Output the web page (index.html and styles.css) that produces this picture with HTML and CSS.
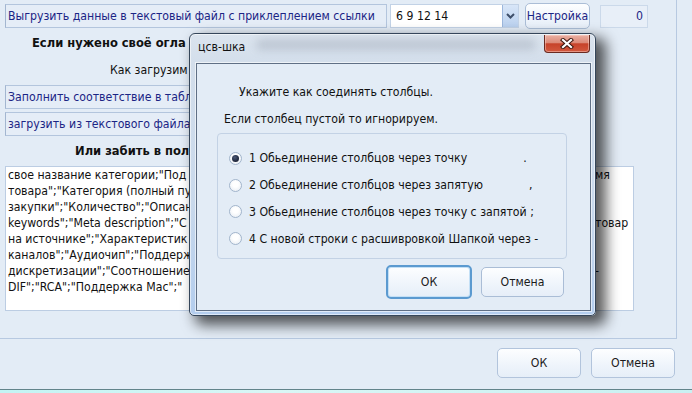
FILE: index.html
```html
<!DOCTYPE html>
<html lang="ru">
<head>
<meta charset="utf-8">
<title>цсв-шка</title>
<link rel="stylesheet" href="styles.css">
</head>
<body>
<div class="screen">
  <div class="panel">
    <div class="row1">
      <div class="box box-export">Выгрузить данные в текстовый файл с приклеплением ссылки</div>
      <div class="combo">
        <div class="combo-input">6 9 12 14</div>
        <div class="combo-btn"><svg width="9" height="6" viewBox="0 0 9 6"><path d="M1 1 L4.5 4.5 L8 1" fill="none" stroke="#3e4f6a" stroke-width="2"/></svg></div>
      </div>
      <div class="btn btn-set">Настройка</div>
      <div class="count">0</div>
    </div>
    <div class="label bold label-own">Если нужено своё огла</div>
    <div class="label label-how">Как загрузим</div>
    <div class="box box-fill">Заполнить соответствие в таблице</div>
    <div class="box box-load">загрузить из текстового файла</div>
    <div class="label bold label-or">Или забить в пол</div>
    <div class="textarea">
      <div class="tline"><span class="tl">свое название категории;"Под</span><span class="tr">мя</span></div>
      <div class="tline"><span class="tl">товара";"Категория (полный пу</span><span class="tr"></span></div>
      <div class="tline"><span class="tl">закупки";"Количество";"Описан</span><span class="tr"></span></div>
      <div class="tline"><span class="tl">keywords";"Meta description";"С</span><span class="tr">товар</span></div>
      <div class="tline"><span class="tl">на источнике";"Характеристик</span><span class="tr"></span></div>
      <div class="tline"><span class="tl">каналов";"Аудиочип";"Поддерж</span><span class="tr"></span></div>
      <div class="tline"><span class="tl">дискретизации";"Соотношение</span><span class="tr">-</span></div>
      <div class="tline"><span class="tl">DIF";"RCA";"Поддержка Mac";"</span><span class="tr"></span></div>
    </div>
  </div>
  <div class="footer">
    <div class="btn btn-main">ОК</div>
    <div class="btn btn-main">Отмена</div>
  </div>
  <div class="taskbar"></div>

  <div class="dialog">
    <div class="titlebar">
      <span class="title">цсв-шка</span>
      <div class="close"><svg width="14" height="11" viewBox="0 0 14 11"><path d="M3 2 L11 9 M11 2 L3 9" stroke="#3d1810" stroke-width="4.2" stroke-linecap="square"/><path d="M3 2 L11 9 M11 2 L3 9" stroke="#ffffff" stroke-width="2.2" stroke-linecap="square"/></svg></div>
    </div>
    <div class="client">
      <div class="dlg-line1">Укажите как соединять столбцы.</div>
      <div class="dlg-line2">Если столбец пустой то игнорируем.</div>
      <div class="group">
        <div class="opt"><span class="radio checked"></span><span>1 Обьединение столбцов через точку</span><span class="sep sep1">.</span></div>
        <div class="opt"><span class="radio"></span><span>2 Обьединение столбцов через запятую</span><span class="sep sep2">,</span></div>
        <div class="opt"><span class="radio"></span><span>3 Обьединение столбцов через точку с запятой ;</span></div>
        <div class="opt"><span class="radio"></span><span>4 С новой строки с расшивровкой Шапкой через -</span></div>
      </div>
      <div class="dlg-buttons">
        <div class="btn btn-ok">ОК</div>
        <div class="btn btn-cancel">Отмена</div>
      </div>
    </div>
  </div>
</div>
</body>
</html>
```

FILE: styles.css
```css
* { box-sizing: border-box; }
html, body {
  margin: 0;
  padding: 0;
  width: 692px;
  height: 393px;
  overflow: hidden;
}
body {
  background: #e3ecf6;
  font-family: "DejaVu Sans Condensed", "DejaVu Sans", sans-serif;
  font-size: 12.2px;
  color: #111;
}
.screen {
  position: relative;
  width: 692px;
  height: 393px;
}
.panel {
  width: 677px;
  height: 339px;
  border-right: 1px solid #b7c9e1;
  border-bottom: 1px solid #b7c9e1;
  padding-left: 5px;
  display: flex;
  flex-direction: column;
}
.row1 {
  display: flex;
  align-items: center;
  margin-top: 4px;
  height: 24px;
}
.box {
  height: 24px;
  border: 1px solid #b3c5dd;
  border-left-color: #a3b6d0;
  background: #e5edf7;
  color: #1b2585;
  padding-left: 2px;
  display: flex;
  align-items: center;
  white-space: nowrap;
  overflow: hidden;
}
.box-export { width: 382px; }
.box-fill { width: 385px; margin-top: 7px; }
.box-load { width: 385px; margin-top: 3px; }
.combo {
  display: flex;
  margin-left: 3px;
  width: 129px;
  height: 24px;
  border: 1px solid #c2d2e6;
}
.combo-input {
  flex: 1;
  background: #fff;
  padding-left: 5px;
  display: flex;
  align-items: center;
  color: #111;
}
.combo-btn {
  width: 16px;
  background: linear-gradient(#d8e6f8, #b9d0ee);
  border-left: 1px solid #9cb7dc;
  display: flex;
  align-items: center;
  justify-content: center;
}
.btn {
  display: flex;
  align-items: center;
  justify-content: center;
  border: 1px solid #aabdd6;
  border-radius: 4px;
  background: linear-gradient(#fdfeff, #eef4fb 60%, #e6eef8);
  color: #1a1a1a;
}
.btn-set {
  margin-left: 6px;
  width: 65px;
  height: 26px;
  color: #1b2585;
  border-radius: 5px;
}
.count {
  margin-left: 10px;
  width: 48px;
  height: 23px;
  border: 1px solid #cbd9ea;
  background: #e8eff8;
  color: #1b2585;
  display: flex;
  align-items: center;
  justify-content: flex-end;
  padding-right: 4px;
}
.label {
  line-height: 16px;
  height: 16px;
  white-space: nowrap;
}
.bold { font-weight: bold; font-size: 12.8px; }
.label-own { margin-top: 7px; padding-left: 27px; }
.label-how { margin-top: 11px; padding-left: 105px; }
.label-or { margin-top: 7px; padding-left: 70px; }
.textarea {
  margin-top: 7px;
  width: 629px;
  height: 145px;
  background: #fff;
  border: 1px solid #bccde3;
  padding: 0 2px;
  line-height: 16px;
  overflow: hidden;
}
.tline {
  display: grid;
  grid-template-columns: 587px 1fr;
  white-space: nowrap;
}
.tl { overflow: hidden; }
.footer {
  height: 50px;
  display: flex;
  justify-content: flex-end;
  align-items: flex-start;
  gap: 10px;
  padding-top: 9px;
  padding-right: 17px;
}
.btn-main {
  width: 84px;
  height: 30px;
  border-radius: 5px;
  border-color: #b2c4dc;
}
.taskbar {
  height: 4px;
  border-top: 1px solid #62848b;
  background: linear-gradient(90deg, #c3f4f4, #d9f7f6 40%, #c9f1f2);
}

/* dialog window */
.dialog {
  position: absolute;
  left: 189px;
  top: 33px;
  width: 407px;
  height: 283px;
  border: 1px solid #35465a;
  border-radius: 6px 6px 5px 5px;
  background: linear-gradient(180deg, #dbe4ee 0px, #d3deeb 30px, #c9d9ec 60%, #b3cdee 100%);
  box-shadow: 8px 7px 14px 2px rgba(0, 0, 0, 0.65), inset 0 0 0 1px rgba(255, 255, 255, 0.55);
  padding: 0 4px 4px 6px;
  display: flex;
  flex-direction: column;
}
.titlebar {
  position: relative;
  height: 29px;
  display: flex;
  align-items: center;
  padding-left: 2px;
  padding-bottom: 3px;
}
.titlebar::before {
  content: "";
  position: absolute;
  left: 60px;
  top: 5px;
  width: 280px;
  height: 11px;
  background: rgba(95, 105, 125, 0.22);
  filter: blur(4px);
  border-radius: 6px;
}
.title {
  position: relative;
  color: #111;
}
.close {
  position: absolute;
  right: 1px;
  top: 1px;
  width: 46px;
  height: 18px;
  border: 1px solid #6a2a20;
  border-top: none;
  border-radius: 0 0 4px 4px;
  background: linear-gradient(180deg, #eab0a3 0%, #dc8a78 45%, #c7432a 52%, #d2583e 100%);
  display: flex;
  align-items: center;
  justify-content: center;
  box-shadow: inset 0 0 0 1px rgba(255, 220, 210, 0.45);
}
.client {
  width: 395px;
  height: 248px;
  border: 1px solid #5f6f85;
  background: #e3ecf6;
  box-shadow: 0 0 0 1px rgba(255, 255, 255, 0.6);
  display: flex;
  flex-direction: column;
}
.dlg-line1 {
  margin-top: 20px;
  padding-left: 42px;
  line-height: 16px;
}
.dlg-line2 {
  margin-top: 11px;
  padding-left: 27px;
  line-height: 16px;
}
.group {
  margin-top: 6px;
  margin-left: 20px;
  width: 350px;
  height: 126px;
  border: 1px solid #c3d2e5;
  border-radius: 4px;
  padding: 11px 0 0 11px;
  display: grid;
  grid-template-rows: repeat(4, 26.8px);
  align-content: start;
}
.opt {
  display: flex;
  align-items: center;
  white-space: nowrap;
}
.radio {
  position: relative;
  width: 13px;
  height: 13px;
  border-radius: 50%;
  border: 1px solid #a2b5cc;
  background: radial-gradient(circle at 50% 40%, #ffffff 30%, #e4eaf2 100%);
  margin-right: 7px;
  flex: none;
}
.radio.checked::after {
  content: "";
  position: absolute;
  left: 2px;
  top: 2px;
  width: 7px;
  height: 7px;
  border-radius: 50%;
  background: radial-gradient(circle at 40% 35%, #4b5876, #1c2438 70%);
}
.sep1 { margin-left: 56px; }
.sep2 { margin-left: 46px; }
.dlg-buttons {
  margin-top: 6px;
  padding-left: 189px;
  display: flex;
  align-items: center;
  gap: 9px;
}
.btn-ok {
  width: 86px;
  height: 34px;
  border: 2px solid #5b9ad0;
  border-radius: 5px;
  box-shadow: inset 0 0 0 1px #c4e0f6;
}
.btn-cancel {
  width: 83px;
  height: 30px;
  border-radius: 5px;
}
```
